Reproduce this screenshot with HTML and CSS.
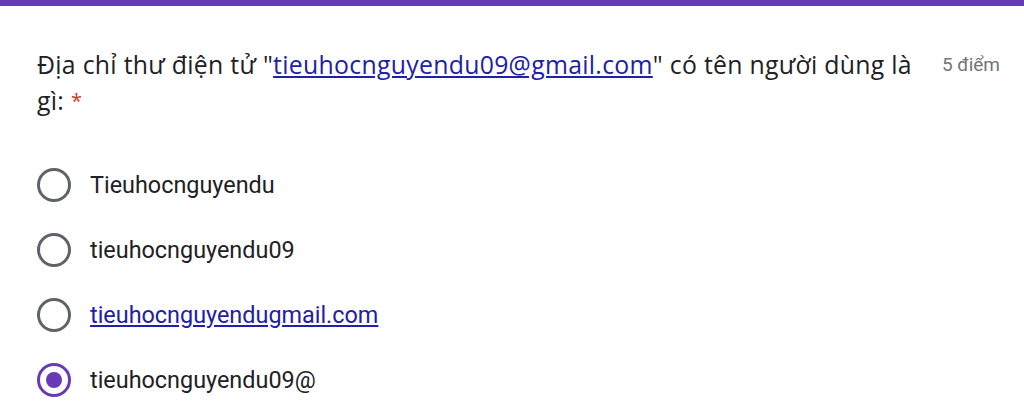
FILE: index.html
```html
<!DOCTYPE html>
<html lang="vi">
<head>
  <meta charset="UTF-8" />
  <meta name="viewport" content="width=device-width, initial-scale=1.0"/>
  <title>Câu hỏi</title>
  <link rel="stylesheet" href="styles.css">
</head>
<body>
  <div class="top-bar"></div>
  <div class="question">
    <div class="question-head">
      <p class="question-title">
        Địa chỉ thư điện tử "<a href="#">tieuhocnguyendu09@gmail.com</a>" có tên người dùng là gì: <span class="required">*</span>
      </p>
      <span class="points">5 điểm</span>
    </div>

    <ul class="options">
      <li class="option">
        <span class="radio"></span>
        <span class="label">Tieuhocnguyendu</span>
      </li>
      <li class="option">
        <span class="radio"></span>
        <span class="label">tieuhocnguyendu09</span>
      </li>
      <li class="option">
        <span class="radio"></span>
        <a class="label" href="#">tieuhocnguyendugmail.com</a>
      </li>
      <li class="option">
        <span class="radio checked"></span>
        <span class="label">tieuhocnguyendu09@</span>
      </li>
    </ul>
  </div>
</body>
</html>
```

FILE: styles.css
```css
* { box-sizing: border-box; }

body {
  margin: 0;
  background: #fff;
  font-family: Roboto, "Liberation Sans", sans-serif;
  color: #202124;
  overflow: hidden;
}

.top-bar {
  height: 6px;
  background: #673ab7;
}

.question {
  padding: 40px 24px 0 37px;
}

.question-head {
  display: flex;
  justify-content: space-between;
  align-items: flex-start;
  gap: 12px;
}

.question-title {
  margin: 0;
  font-family: "Open Sans", sans-serif;
  font-size: 24.8px;
  letter-spacing: 0.3px;
  line-height: 36px;
  color: #202124;
  max-width: 890px;
}

.question-title a {
  color: #2020a8;
  text-decoration: underline;
}

.required {
  color: #d93025;
  font-size: 20px;
  vertical-align: 2px;
}

.points {
  font-size: 19px;
  color: #70757a;
  line-height: 36px;
  white-space: nowrap;
  margin-top: 1px;
}

.options {
  list-style: none;
  margin: 33px 0 0;
  padding: 0;
}

.option {
  display: flex;
  align-items: center;
  gap: 19px;
  height: 65px;
}

.radio {
  width: 34px;
  height: 34px;
  border: 3px solid #5f6368;
  border-radius: 50%;
  flex-shrink: 0;
  position: relative;
}

.radio.checked {
  border-color: #673ab7;
}

.radio.checked::after {
  content: "";
  position: absolute;
  left: 6px;
  top: 6px;
  width: 16px;
  height: 16px;
  border-radius: 50%;
  background: #673ab7;
}

.label {
  font-size: 23.4px;
  color: #202124;
}

a.label {
  color: #2020a8;
}
```
